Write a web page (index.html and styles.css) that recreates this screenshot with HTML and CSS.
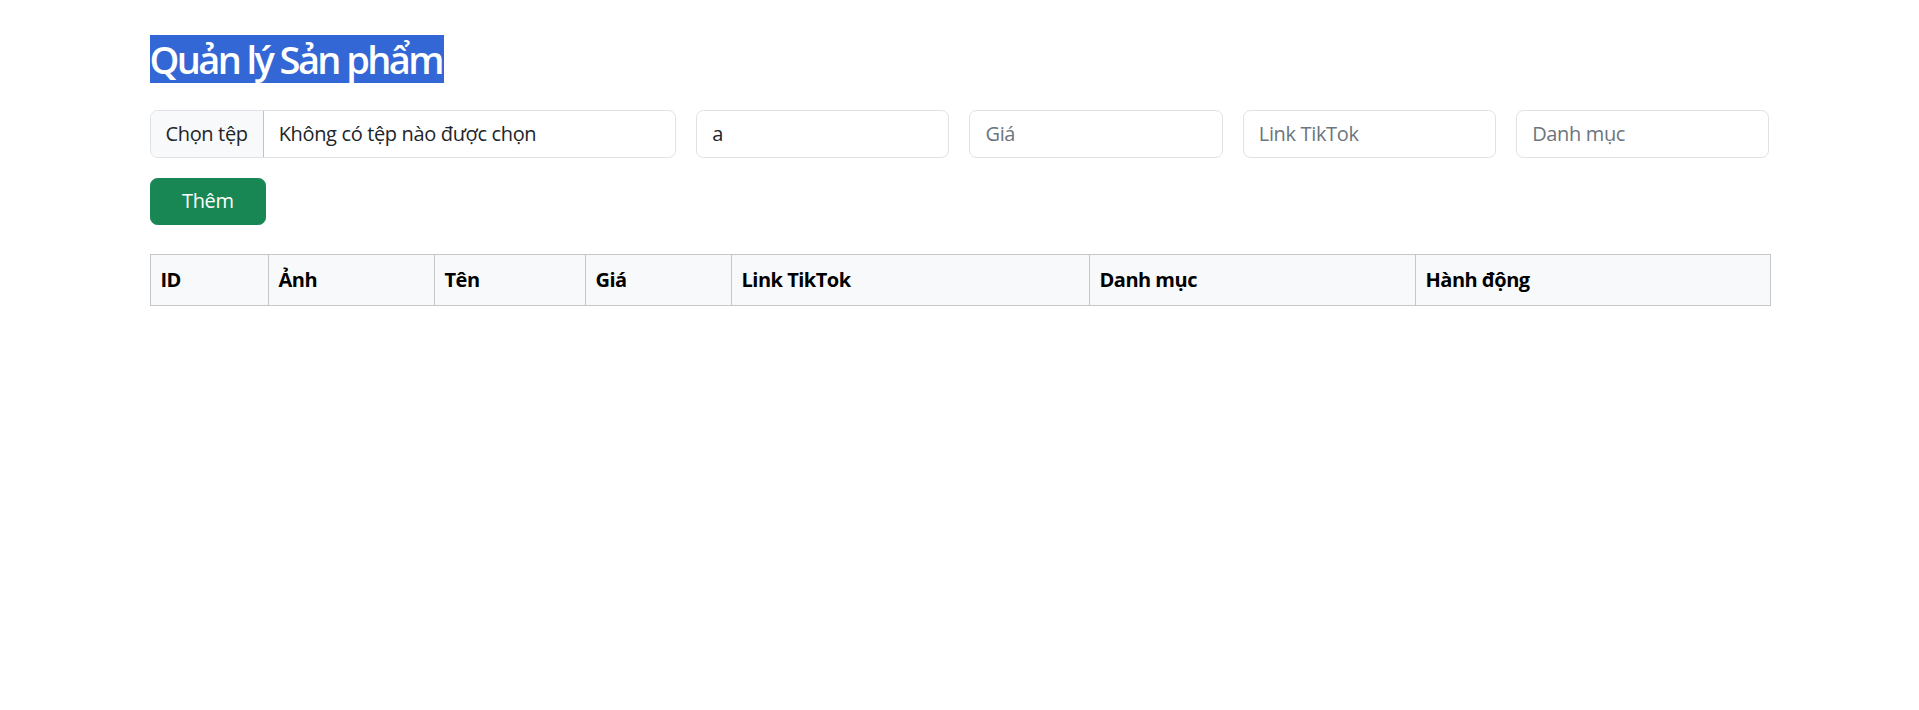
FILE: index.html
```html
<!DOCTYPE html>
<html lang="vi">
<head>
<meta charset="utf-8">
<title>Quản lý Sản phẩm</title>
<link rel="stylesheet" href="styles.css">
</head>
<body>
<div class="container">
  <h2 class="title"><span class="title-sel">Quản lý Sản phẩm</span></h2>
  <form class="form-grid">
    <div class="col-4">
      <div class="file-input">
        <span class="file-btn">Chọn tệp</span>
        <span class="file-name">Không có tệp nào được chọn</span>
      </div>
    </div>
    <div class="col-2"><div class="field">a</div></div>
    <div class="col-2"><div class="field placeholder">Giá</div></div>
    <div class="col-2"><div class="field placeholder">Link TikTok</div></div>
    <div class="col-2"><div class="field placeholder">Danh mục</div></div>
    <div class="col-1"><button type="button" class="btn-add">Thêm</button></div>
  </form>
  <table class="products">
    <colgroup>
      <col class="c-id"><col class="c-img"><col class="c-name"><col class="c-price"><col class="c-link"><col class="c-cat"><col class="c-act">
    </colgroup>
    <thead>
      <tr>
        <th>ID</th><th>Ảnh</th><th>Tên</th><th>Giá</th><th>Link TikTok</th><th>Danh mục</th><th>Hành động</th>
      </tr>
    </thead>
    <tbody></tbody>
  </table>
</div>
</body>
</html>
```

FILE: styles.css
```css
* { box-sizing: border-box; }
html, body { margin: 0; padding: 0; background: #fff; }
body {
  font-family: "Open Sans", "Noto Sans", sans-serif;
  font-size: 20px;
  line-height: 30px;
  color: #212529;
}
.container {
  width: 1620px;
  margin: 0 auto;
  padding-top: 35px;
}
.title {
  margin: 0 0 27px 0;
  font-size: 38px;
  line-height: 48px;
  font-weight: 600;
  height: 48px;
}
.title-sel {
  display: inline-block;
  background: #3467d6;
  color: #fff;
  line-height: 48px;
  height: 48px;
  letter-spacing: -2.6px;
  padding-right: 2px;
}
.form-grid {
  display: grid;
  grid-template-columns: repeat(12, 1fr);
  column-gap: 20px;
  row-gap: 20px;
  margin: 0 0 29px 0;
}
.col-4 { grid-column: span 4; }
.col-2 { grid-column: span 2; }
.form-grid .col-1 { grid-column: 1 / span 1; }
.file-input, .field {
  height: 47.5px;
  border: 1px solid #dee2e6;
  border-radius: 7.5px;
  background: #fff;
  font-size: 20px;
  line-height: 30px;
  overflow: hidden;
  white-space: nowrap;
  letter-spacing: -0.35px;
}
.file-input { display: flex; align-items: stretch; }
.file-btn {
  background: #f8f9fa;
  padding: 7.5px 15px;
  border-right: 1px solid #a9c6ee;
  margin-right: 15px;
  color: #212529;
}
.file-name { padding: 7.5px 0; }
.field { padding: 7.5px 15px; color: #212529; }
.field.placeholder { color: #6c757d; }
.btn-add {
  width: 100%;
  height: 47.5px;
  border: 1px solid #198754;
  background: #198754;
  color: #fff;
  border-radius: 7.5px;
  font-family: inherit;
  font-size: 20px;
  line-height: 30px;
  padding: 7.5px 15px;
  letter-spacing: -0.35px;
}
.products {
  width: 1620px;
  table-layout: fixed;
  border-collapse: collapse;
}
.products th {
  background: #f8f9fa;
  border: 1px solid #c6c7c8;
  padding: 10px;
  text-align: left;
  font-weight: 700;
  font-size: 20px;
  line-height: 30px;
  color: #000;
  white-space: nowrap;
  letter-spacing: -0.5px;
}
.c-id { width: 118px; }
.c-img { width: 166px; }
.c-name { width: 151px; }
.c-price { width: 146px; }
.c-link { width: 358px; }
.c-cat { width: 326px; }
.c-act { width: 355px; }
```
